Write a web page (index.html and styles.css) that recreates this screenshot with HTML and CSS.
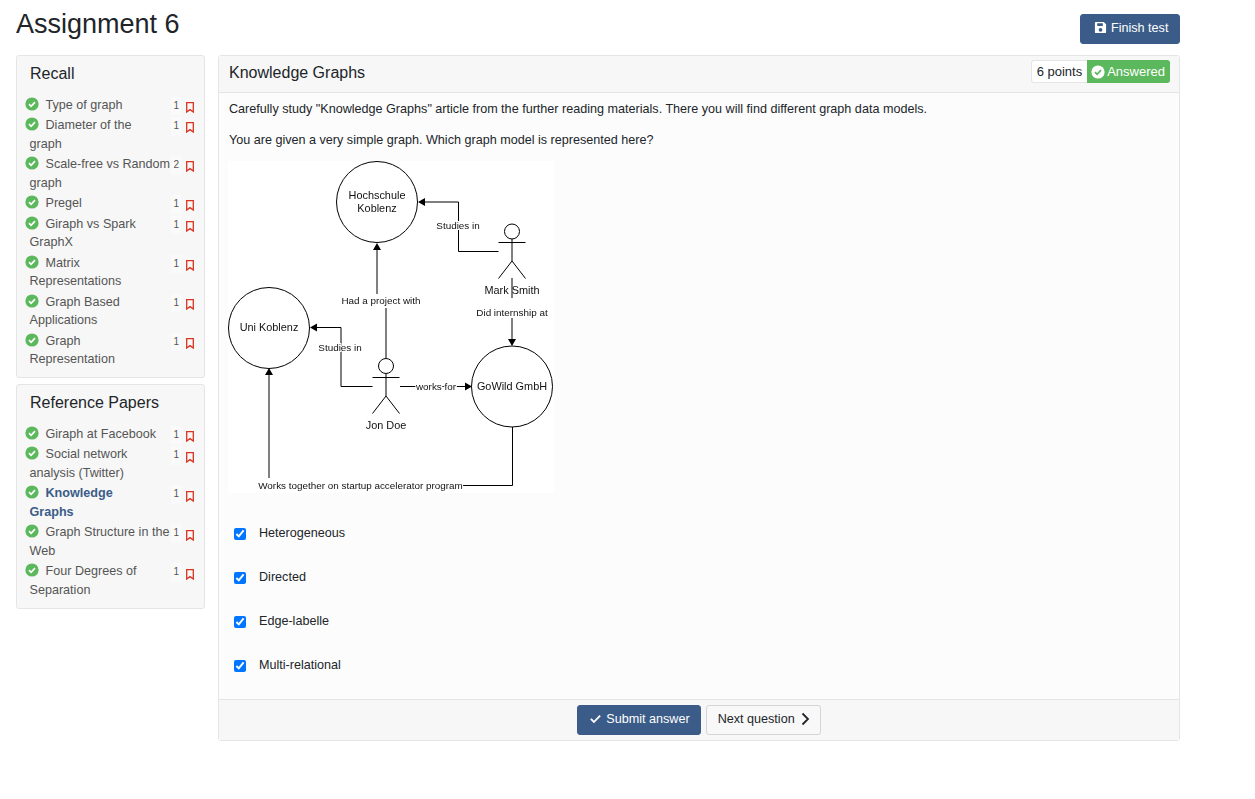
FILE: index.html
```html
<!DOCTYPE html>
<html lang="en">
<head>
<meta charset="utf-8">
<title>Assignment 6</title>
<link rel="stylesheet" href="styles.css">
</head>
<body>
<svg width="0" height="0" class="defs">
  <symbol id="tick" viewBox="0 0 14 14"><circle cx="7" cy="7" r="6.600" fill="currentColor"/><path d="M4 7.200l2.100 2.100L10 5.200" fill="none" stroke="var(--check,#fff)" stroke-width="1.700"/></symbol>
  <symbol id="mark" viewBox="0 0 8 11"><path d="M.7.7h6.600v9.300L4 7.600.7 10z" fill="none" stroke="#d9341f" stroke-width="1.300"/></symbol>
</svg>
<div class="page">
  <header class="top">
    <h1>Assignment 6</h1>
    <button class="btn primary finish"><svg class="ico" viewBox="0 0 14 14"><path fill-rule="evenodd" d="M2 1h8.500L13 3.500V12a1 1 0 0 1-1 1H2a1 1 0 0 1-1-1V2a1 1 0 0 1 1-1zM3.500 2.500v3h6v-3zM7 7.500a2 2 0 1 0 0 4 2 2 0 0 0 0-4z" fill="currentColor"/></svg>Finish test</button>
  </header>
  <div class="columns">
    <aside class="side">
      <section class="card">
        <h2>Recall</h2>
        <div class="row"><span class="meta"><b>1</b><svg class="bm"><use href="#mark"/></svg></span><svg class="ok"><use href="#tick"/></svg><a>Type of graph</a></div>
        <div class="row"><span class="meta"><b>1</b><svg class="bm"><use href="#mark"/></svg></span><svg class="ok"><use href="#tick"/></svg><a>Diameter of the<br>graph</a></div>
        <div class="row"><span class="meta"><b>2</b><svg class="bm"><use href="#mark"/></svg></span><svg class="ok"><use href="#tick"/></svg><a>Scale-free vs Random<br>graph</a></div>
        <div class="row"><span class="meta"><b>1</b><svg class="bm"><use href="#mark"/></svg></span><svg class="ok"><use href="#tick"/></svg><a>Pregel</a></div>
        <div class="row"><span class="meta"><b>1</b><svg class="bm"><use href="#mark"/></svg></span><svg class="ok"><use href="#tick"/></svg><a>Giraph vs Spark<br>GraphX</a></div>
        <div class="row"><span class="meta"><b>1</b><svg class="bm"><use href="#mark"/></svg></span><svg class="ok"><use href="#tick"/></svg><a>Matrix<br>Representations</a></div>
        <div class="row"><span class="meta"><b>1</b><svg class="bm"><use href="#mark"/></svg></span><svg class="ok"><use href="#tick"/></svg><a>Graph Based<br>Applications</a></div>
        <div class="row"><span class="meta"><b>1</b><svg class="bm"><use href="#mark"/></svg></span><svg class="ok"><use href="#tick"/></svg><a>Graph<br>Representation</a></div>
      </section>
      <section class="card">
        <h2>Reference Papers</h2>
        <div class="row"><span class="meta"><b>1</b><svg class="bm"><use href="#mark"/></svg></span><svg class="ok"><use href="#tick"/></svg><a>Giraph at Facebook</a></div>
        <div class="row"><span class="meta"><b>1</b><svg class="bm"><use href="#mark"/></svg></span><svg class="ok"><use href="#tick"/></svg><a>Social network<br>analysis (Twitter)</a></div>
        <div class="row"><span class="meta"><b>1</b><svg class="bm"><use href="#mark"/></svg></span><svg class="ok"><use href="#tick"/></svg><a class="current">Knowledge<br>Graphs</a></div>
        <div class="row"><span class="meta"><b>1</b><svg class="bm"><use href="#mark"/></svg></span><svg class="ok"><use href="#tick"/></svg><a>Graph Structure in the<br>Web</a></div>
        <div class="row"><span class="meta"><b>1</b><svg class="bm"><use href="#mark"/></svg></span><svg class="ok"><use href="#tick"/></svg><a>Four Degrees of<br>Separation</a></div>
      </section>
    </aside>
    <main class="panel">
      <div class="panel-head">
        <h2>Knowledge Graphs</h2>
        <div class="badges"><span class="points">6 points</span><span class="answered"><svg class="ok-w"><use href="#tick"/></svg>Answered</span></div>
      </div>
      <div class="panel-body">
        <p>Carefully study "Knowledge Graphs" article from the further reading materials. There you will find different graph data models.</p>
        <p class="question">You are given a very simple graph. Which graph model is represented here?</p>
        <svg class="graph" viewBox="228 161 326 332">
          <rect x="228" y="161" width="326" height="332" fill="#fff"/>
          <g fill="none" stroke="#000">
            <circle cx="377" cy="202" r="40.500"/>
            <circle cx="269" cy="328" r="40.500"/>
            <circle cx="512" cy="386.500" r="40.500"/>
            <circle cx="512" cy="231.500" r="7.500"/>
            <path d="M498.500 242.500h27M512 239v22M512 261l-13.500 17.500M512 261l13.500 17.500"/>
            <circle cx="386" cy="366" r="7.500"/>
            <path d="M372.500 377.500h27M386 374v22M386 396l-13.500 17.500M386 396l13.500 17.500"/>
            <path d="M498.500 251.500H458.500V202H424"/>
            <path d="M377 294V249"/>
            <path d="M386 308V358"/>
            <path d="M372.500 386.500H341V327.500H316"/>
            <path d="M400 386.500H466"/>
            <path d="M512 278V298M512 318V340"/>
            <path d="M512.500 427V485.500H462"/>
            <path d="M269 478V374"/>
          </g>
          <g fill="#000">
            <path d="M418 202l7-4v8zM377 243l-4 7h8zM310 327.500l7-4v8zM472 386.500l-7-4v8zM512 346l-4-7h8zM269 368l-4 7h8z"/>
          </g>
          <g class="lbl">
            <text x="377" y="199">Hochschule</text>
            <text x="377" y="212">Koblenz</text>
            <text x="269" y="331">Uni Koblenz</text>
            <text x="512" y="389.500">GoWild GmbH</text>
            <text x="512" y="294">Mark Smith</text>
            <text x="386" y="429">Jon Doe</text>
          </g>
          <g class="lbl small">
            <text x="458" y="229">Studies in</text>
            <text x="381" y="304">Had a project with</text>
            <text x="512" y="316">Did internship at</text>
            <text x="340" y="351">Studies in</text>
            <text x="436" y="389.500">works for</text>
            <text x="360.500" y="488.500">Works together on startup accelerator program</text>
          </g>
        </svg>
        <div class="options">
          <label class="opt"><input type="checkbox" checked><span>Heterogeneous</span></label>
          <label class="opt"><input type="checkbox" checked><span>Directed</span></label>
          <label class="opt"><input type="checkbox" checked><span>Edge-labelle</span></label>
          <label class="opt"><input type="checkbox" checked><span>Multi-relational</span></label>
        </div>
      </div>
      <div class="panel-foot">
        <button class="btn primary"><svg class="ico" viewBox="0 0 14 14"><path d="M2 7.500l3.300 3.300L12 4" fill="none" stroke="currentColor" stroke-width="2"/></svg>Submit answer</button>
        <button class="btn plain">Next question<svg class="chev" viewBox="0 0 10 14"><path d="M2.500 1.500L8 7l-5.500 5.500" fill="none" stroke="currentColor" stroke-width="1.800"/></svg></button>
      </div>
    </main>
  </div>
</div>
</body>
</html>
```

FILE: styles.css
```css
html, body { margin: 0; padding: 0; background: #fff; }
body { font-family: "Liberation Sans", Arial, sans-serif; font-size: 12.600px; line-height: 18px; color: #212529; height: 799px; overflow: hidden; }
.defs { position: absolute; }
.page { width: 1164px; margin-left: 16px; }
.top { display: flex; justify-content: space-between; align-items: flex-start; height: 55px; }
h1 { margin: 6px 0 0; font-size: 27px; line-height: 36px; font-weight: 400; }
.btn { font: 12.600px/18px "Liberation Sans", Arial, sans-serif; border-radius: 3px; padding: 0 10px 3px 11px; height: 30px; display: inline-flex; align-items: center; cursor: pointer; box-sizing: border-box; }
.primary { background: #3b5c88; border: 1px solid #3b5c88; color: #fff; }
.plain { background: #f8f8f8; border: 1px solid #d5d5d5; color: #212529; }
.finish { margin-top: 14px; width: 100px; padding: 0 0 3px 13px; }
.ico { width: 13px; height: 13px; margin-right: 4px; }
.chev { width: 10px; height: 14px; margin-left: 5px; }
.columns { display: flex; gap: 13px; align-items: flex-start; }
.side { width: 189px; flex: none; display: flex; flex-direction: column; gap: 6.300px; }
.card { background: #f7f7f7; border: 1px solid #e5e5e5; border-radius: 3px; padding: 8px 8px 8.500px 12.500px; }
.card h2 { margin: 0 0 9.500px .500px; font-size: 16px; line-height: 20px; font-weight: 400; }
.row { position: relative; padding-top: 2px; color: #555; line-height: 18.500px; white-space: nowrap; }
.row a { color: #555; }
.row a.current { color: #3b5c88; font-weight: 700; }
.ok { width: 14px; height: 14px; color: #5cb85c; margin-left: -4.500px; margin-right: 6.500px; vertical-align: -2px; }
.meta { position: absolute; right: 0; top: 3px; display: flex; align-items: center; gap: 5px; }
.meta b { font-weight: 400; font-size: 10px; background: #fafafa; color: #555; padding: 0 2px; }
.bm { width: 8px; height: 11px; margin-top: 3px; margin-right: 2px; }
.panel { flex: 1; background: #fcfcfc; border: 1px solid #e5e5e5; border-radius: 3px; }
.panel-head { display: flex; justify-content: space-between; align-items: flex-start; height: 32px; background: #f7f7f7; border-bottom: 1px solid #e5e5e5; padding: 4px 9px 0 10px; }
.panel-head h2 { margin: 3px 0 0; font-size: 16px; font-weight: 400; line-height: 20px; }
.badges { display: flex; height: 23px; font-size: 13px; }
.points { background: #fff; border: 1px solid #e5e5e5; border-right: 0; border-radius: 3px 0 0 3px; padding: 0 5px; line-height: 21px; }
.answered { --check: #5cb85c; background: #5cb85c; color: #fff; border-radius: 0 3px 3px 0; padding: 0 5px 0 4px; display: flex; align-items: center; gap: 2px; }
.ok-w { width: 14px; height: 14px; color: #fff; }
.panel-body { padding: 7px 10px 0; height: 606px; box-sizing: border-box; }
.panel-body p { margin: 0 0 13px; line-height: 18px; }
.panel-body .question { margin-bottom: 12px; }
.graph { display: block; width: 326px; height: 332px; margin-left: -1px; filter: blur(0.3px); }
.lbl text { font-size: 10.900px; text-anchor: middle; fill: #111; }
.small text { font-size: 9.900px; paint-order: stroke; stroke: #fff; stroke-width: 2px; }
.options { margin-top: 18px; }
.opt { display: flex; align-items: center; height: 44px; }
.opt input { margin: 2px 13px 0 5px; width: 12px; height: 12px; }
.panel-foot { display: flex; justify-content: center; gap: 5px; background: #f7f7f7; border-top: 1px solid #e5e5e5; padding: 5px 0; height: 30px; }
```
